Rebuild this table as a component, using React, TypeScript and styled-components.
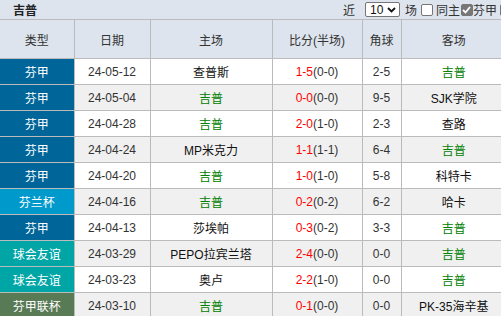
import React from "react";
import styled, { createGlobalStyle } from "styled-components";

const Global = createGlobalStyle`
  html, body { margin: 0; padding: 0; background: #fff; overflow: hidden; }
  body { font-family: "Liberation Sans", "Noto Sans CJK SC", sans-serif; font-size: 12px; color: #333; }
`;

const Wrap = styled.div`
  width: 507px;
`;

const TitleBar = styled.div`
  height: 19px;
  background: #dde4ed;
  display: flex;
  align-items: center;
  padding-left: 13px;
  box-sizing: border-box;
`;

const Title = styled.span`
  font-weight: bold;
  font-size: 12px;
  color: #222;
`;

const Controls = styled.div`
  margin-left: auto;
  margin-right: -5px;
  display: flex;
  align-items: center;
  font-size: 12px;
  color: #333;
`;

const Select = styled.div`
  margin: 0 5px 0 10px;
  width: 35px;
  height: 15px;
  border: 1px solid #767676;
  border-radius: 2px;
  background: #fff;
  display: flex;
  align-items: center;
  justify-content: space-between;
  padding: 0 3px 0 4px;
  box-sizing: border-box;
  color: #111;
  font-size: 12px;
`;

const Box = styled.span<{ $checked?: boolean; $gap: number; $after: number }>`
  display: inline-flex;
  align-items: center;
  justify-content: center;
  width: 12px;
  height: 12px;
  box-sizing: border-box;
  border-radius: 2px;
  margin: 0 ${(p) => p.$after}px 0 ${(p) => p.$gap}px;
  border: 1px solid ${(p) => (p.$checked ? "#777" : "#767676")};
  background: ${(p) => (p.$checked ? "#777" : "#fff")};
`;

const Table = styled.table`
  border-collapse: collapse;
  table-layout: fixed;
  width: 507px;
`;

const HeadCell = styled.th`
  height: 38px;
  padding: 0;
  background: #dde4ed;
  border: 1px solid #bbb;
  font-weight: normal;
  color: #333;
  font-size: 12px;
  text-align: center;
  &:first-child { border-left: none; }
`;

const Row = styled.tr<{ $alt: boolean }>`
  background: ${(p) => (p.$alt ? "#f0f0f0" : "#fff")};
`;

const Cell = styled.td`
  height: 25px;
  padding: 0;
  border: 1px solid #bbb;
  text-align: center;
  white-space: nowrap;
  overflow: hidden;
  font-size: 12px;
  color: #333;
  &:first-child { border-left: none; }
`;

const TypeCell = styled(Cell)<{ $bg: string }>`
  background: ${(p) => p.$bg};
  color: #fff;
`;

const Team = styled.span<{ $me: boolean }>`
  color: ${(p) => (p.$me ? "#008000" : "#111")};
`;

const Red = styled.span`
  color: #f00;
`;

const colors: Record<string, string> = {
  芬甲: "#006699",
  芬兰杯: "#0099cc",
  球会友谊: "#00a5a5",
  芬甲联杯: "#587a55",
};

const rows = [
  ["芬甲", "24-05-12", "查普斯", "1-5", "0-0", "2-5", "吉普"],
  ["芬甲", "24-05-04", "吉普", "0-0", "0-0", "9-5", "SJK学院"],
  ["芬甲", "24-04-28", "吉普", "2-0", "1-0", "2-3", "查路"],
  ["芬甲", "24-04-24", "MP米克力", "1-1", "1-1", "6-4", "吉普"],
  ["芬甲", "24-04-20", "吉普", "1-0", "1-0", "5-8", "科特卡"],
  ["芬兰杯", "24-04-16", "吉普", "0-2", "0-2", "6-2", "哈卡"],
  ["芬甲", "24-04-13", "莎埃帕", "0-3", "0-2", "3-3", "吉普"],
  ["球会友谊", "24-03-29", "PEPO拉宾兰塔", "2-4", "0-0", "0-0", "吉普"],
  ["球会友谊", "24-03-23", "奥卢", "2-2", "1-0", "0-0", "吉普"],
  ["芬甲联杯", "24-03-10", "吉普", "0-1", "0-0", "0-0", "PK-35海辛基"],
];

const Chevron = () => (
  <svg width="9" height="6" viewBox="0 0 9 6">
    <path d="M1 1 L4.5 4.5 L8 1" stroke="#111" strokeWidth="1.8" fill="none" />
  </svg>
);

const Check = () => (
  <svg width="9" height="8" viewBox="0 0 9 8">
    <path d="M1 4 L3.5 6.5 L8 1" stroke="#fff" strokeWidth="1.8" fill="none" />
  </svg>
);

export default function App() {
  return (
    <Wrap>
      <Global />
      <TitleBar>
        <Title>吉普</Title>
        <Controls>
          <span>近</span>
          <Select>
            <span>10</span>
            <Chevron />
          </Select>
          <span>场</span>
          <Box $gap={4} $after={3} />
          <span>同主</span>
          <Box $checked $gap={1} $after={0}>
            <Check />
          </Box>
          <span>芬甲</span>
          <Box $checked $gap={3} $after={0} />
        </Controls>
      </TitleBar>
      <Table>
        <colgroup>
          <col style={{ width: 74 }} />
          <col style={{ width: 76 }} />
          <col style={{ width: 122 }} />
          <col style={{ width: 90 }} />
          <col style={{ width: 39 }} />
          <col />
        </colgroup>
        <thead>
          <tr>
            <HeadCell>类型</HeadCell>
            <HeadCell>日期</HeadCell>
            <HeadCell>主场</HeadCell>
            <HeadCell>比分(半场)</HeadCell>
            <HeadCell>角球</HeadCell>
            <HeadCell>客场</HeadCell>
          </tr>
        </thead>
        <tbody>
          {rows.map((r, i) => (
            <Row key={i} $alt={i % 2 === 1}>
              <TypeCell $bg={colors[r[0]]}>{r[0]}</TypeCell>
              <Cell>{r[1]}</Cell>
              <Cell>
                <Team $me={r[2] === "吉普"}>{r[2]}</Team>
              </Cell>
              <Cell>
                <Red>{r[3]}</Red>({r[4]})
              </Cell>
              <Cell>{r[5]}</Cell>
              <Cell>
                <Team $me={r[6] === "吉普"}>{r[6]}</Team>
              </Cell>
            </Row>
          ))}
        </tbody>
      </Table>
    </Wrap>
  );
}
